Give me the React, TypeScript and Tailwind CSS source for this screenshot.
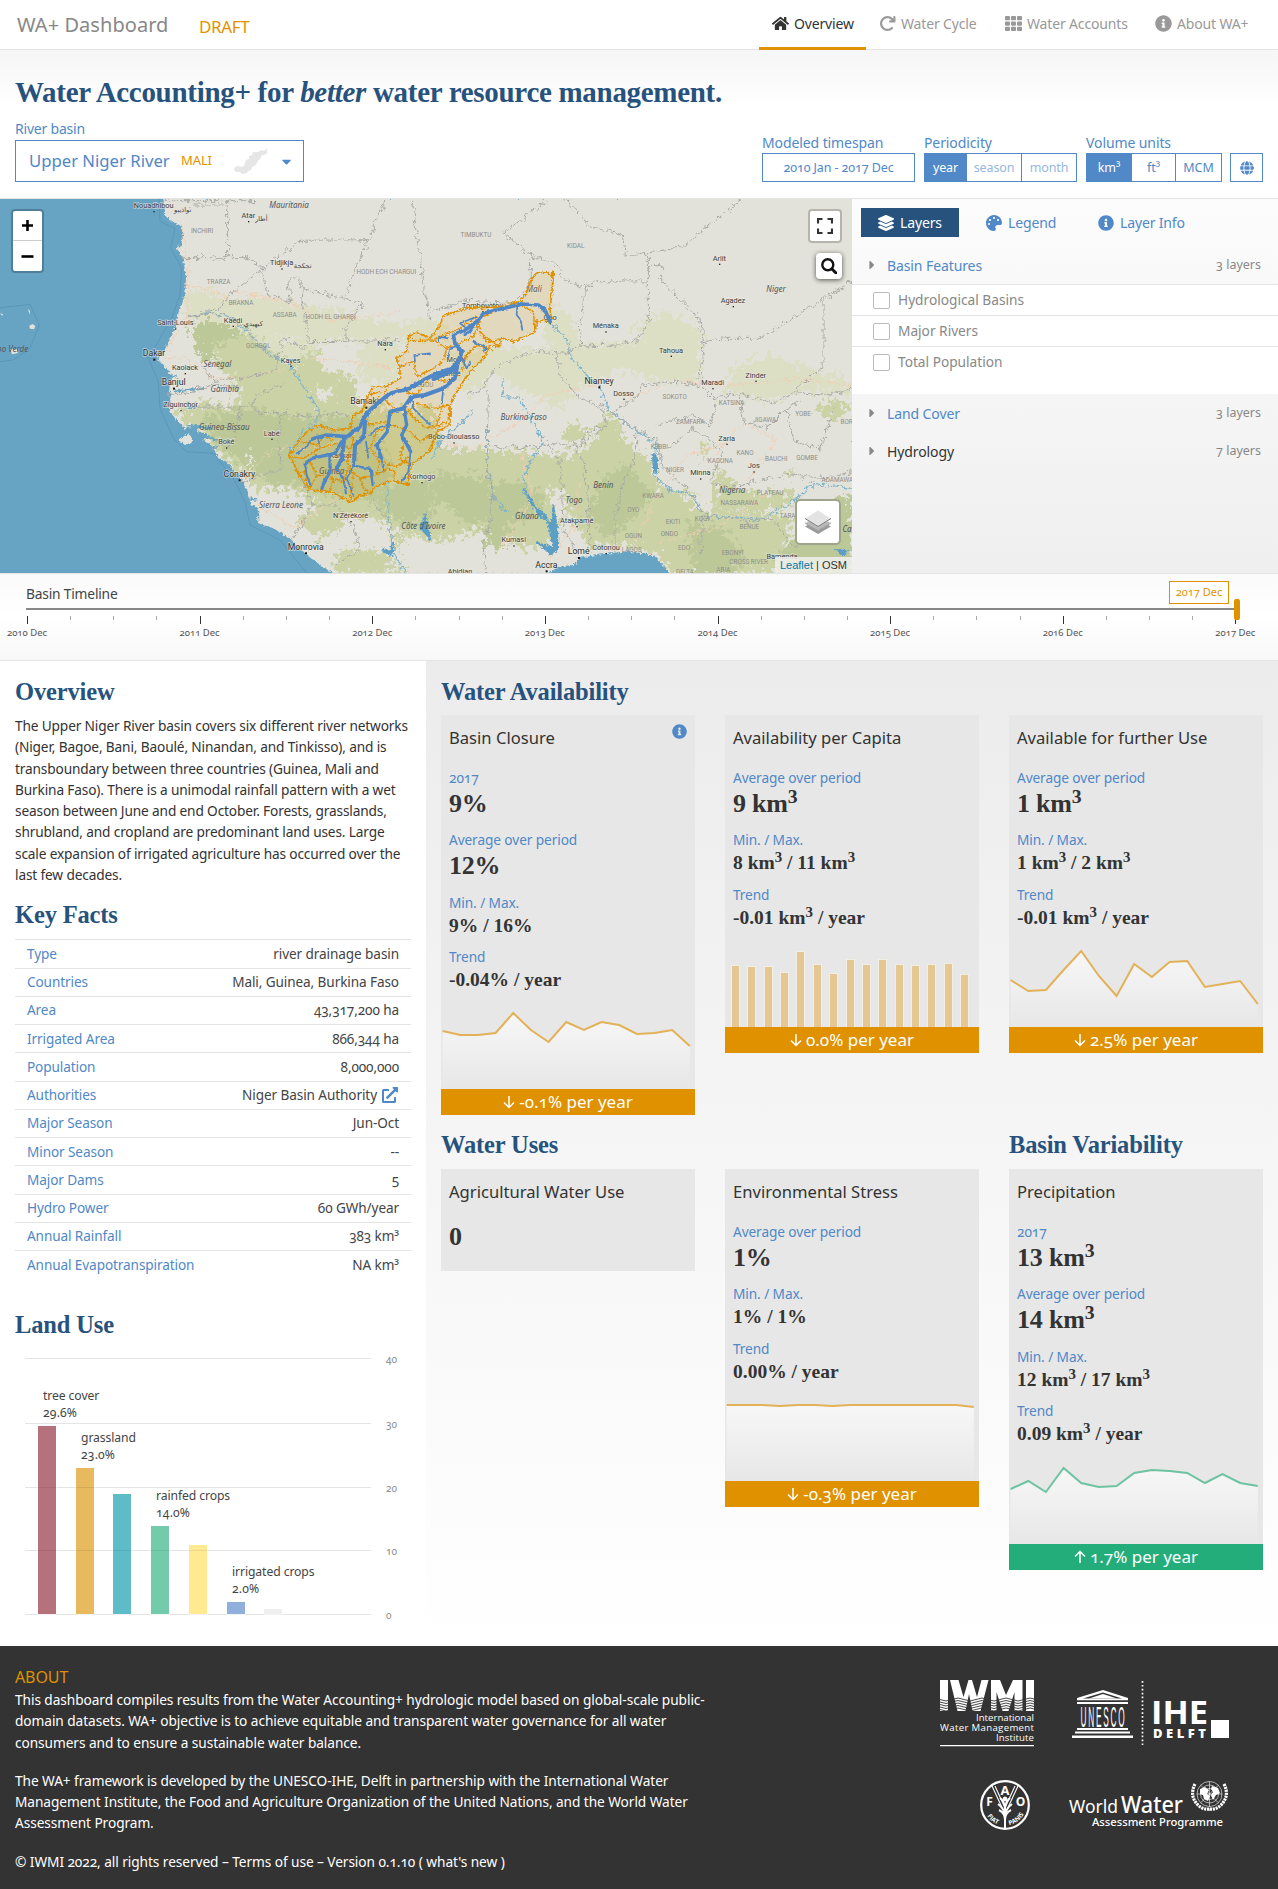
import { Fragment } from "react";
import type { ReactNode } from "react";
import {
  FaHome,
  FaTh,
  FaInfoCircle,
  FaGlobe,
  FaLayerGroup,
  FaPalette,
  FaCaretDown,
  FaCaretRight,
  FaExternalLinkAlt,
} from "react-icons/fa";
import { FaArrowRotateRight } from "react-icons/fa6";

/* ---------- shared pieces ---------- */

function H2({ children, className = "" }: { children: ReactNode; className?: string }) {
  return (
    <h2
      className={`font-['Liberation_Serif',serif] text-[24.500px] leading-[30px] font-bold tracking-[-0.15px] whitespace-nowrap text-[#27527d] ${className}`}
    >
      {children}
    </h2>
  );
}

function Km() {
  return (
    <>
      km<sup className="relative -top-[0.46em] text-[0.76em] leading-none">3</sup>
    </>
  );
}

/* ---------- header ---------- */

const nav = [
  { label: "Overview", icon: <FaHome />, w: "w-[107px]", active: true },
  { label: "Water Cycle", icon: <FaArrowRotateRight />, w: "w-[126px]" },
  { label: "Water Accounts", icon: <FaTh />, w: "w-[150px]" },
  { label: "About WA+", icon: <FaInfoCircle />, w: "w-[119px]" },
];

function TopBar() {
  return (
    <header className="flex h-[50px] items-stretch border-b border-[#e4e4e4] bg-white pr-[17px] pl-[17px]">
      <div className="w-[182px] pt-[10px] text-[20px] leading-[30px] tracking-[0.05px] whitespace-nowrap text-[#888]">
        WA+ Dashboard
      </div>
      <div className="pt-[13px] text-[17px] leading-[28px] tracking-[-0.35px] text-[#df9100]">DRAFT</div>
      <nav className="ml-auto flex">
        {nav.map((n) => (
          <a
            key={n.label}
            className={`-mb-px flex h-[50px] items-center gap-[5px] pb-[3px] pl-[13px] text-[14px] tracking-[-0.15px] whitespace-nowrap ${n.w} ${
              n.active ? "border-b-[3px] border-[#df9100] pt-[3px] text-[#333]" : "text-[#999]"
            }`}
          >
            <span className="text-[17px]">{n.icon}</span>
            {n.label}
          </a>
        ))}
      </nav>
    </header>
  );
}

function Control({ label, className = "", children }: { label: string; className?: string; children: ReactNode }) {
  return (
    <div className={`flex flex-col ${className}`}>
      <div className="h-[21px] text-[14px] leading-[21px] tracking-[-0.1px] whitespace-nowrap text-[#5088c8]">{label}</div>
      <div className="flex h-[29px] border border-[#5088c8] text-[12.500px] tracking-[-0.1px] text-[#5088c8]">{children}</div>
    </div>
  );
}

function Cell({ w, on, dim, children }: { w: string; on?: boolean; dim?: boolean; children: ReactNode }) {
  return (
    <div
      className={`flex items-center justify-center border-r border-[#5088c8] pt-px last:border-r-0 ${w} ${
        on ? "bg-[#5088c8] text-white" : dim ? "text-[#96b8de]" : ""
      }`}
    >
      {children}
    </div>
  );
}

function Intro() {
  return (
    <section className="flex h-[149px] flex-col border-b border-[#e4e4e4] bg-gradient-to-b from-[#f6f6f6] via-white via-40% to-white px-[15px]">
      <h1 className="mt-[22px] h-[40px] font-['Liberation_Serif',serif] text-[29px] leading-[40px] font-bold tracking-[-0.3px] whitespace-nowrap text-[#27527d]">
        Water Accounting+ for <em>better</em> water resource management.
      </h1>
      <div className="flex h-[70px] items-end">
        <div>
          <div className="mb-[1px] text-[14px] leading-[21px] tracking-[-0.2px] text-[#5088c8]">River basin</div>
          <div className="flex h-[42px] w-[289px] items-center border border-[#5088c8] pl-[13px] text-[16.700px] whitespace-nowrap text-[#5088c8]">
            <span className="w-[152px]">Upper Niger River</span>
            <span className="w-[53px] text-[13px] tracking-[-0.1px] text-[#df9100]">MALI</span>
            <svg width="34" height="28" viewBox="0 0 34 28" className="mr-[11px]">
              <path
                fill="#e6e6e6"
                d="M33 1 33 6 30 8 28 8 26 12 23 15 22 18 18 20 17 23 14 24 13 26 8 27 6 25 2 25 0 23 1 20 4 19 7 20 10 19 11 16 12 13 15 12 15 9 18 8 19 5 24 5 27 3 30 4Z"
              />
            </svg>
            <FaCaretDown className="text-[15px]" />
          </div>
        </div>
        <Control label="Modeled timespan" className="ml-auto w-[153px]">
          <Cell w="w-full">2010 Jan - 2017 Dec</Cell>
        </Control>
        <Control label="Periodicity" className="ml-[9px] w-[153px]">
          <Cell w="w-[42px]" on>year</Cell>
          <Cell w="w-[55px]" dim>season</Cell>
          <Cell w="w-[54px]" dim>month</Cell>
        </Control>
        <Control label="Volume units" className="ml-[9px] w-[136px]">
          <Cell w="w-[45px]" on>km³</Cell>
          <Cell w="w-[44px]">ft³</Cell>
          <Cell w="w-[45px]">MCM</Cell>
        </Control>
        <div className="ml-[8px] flex h-[29px] w-[33px] items-center justify-center border border-[#5088c8] text-[14px] text-[#5088c8]">
          <FaGlobe />
        </div>
      </div>
    </section>
  );
}

/* ---------- map ---------- */

const land =
  "M490,12 L496,60 L512,80 L530,85 L545,95 L548,130 L530,160 L548,188 L558,240 L556,290 L545,330 L530,370 L525,400 L505,440 L490,475 L472,490 L500,520 L515,545 L508,580 L512,600 L508,650 L540,685 L555,700 L600,690 L590,712 L625,715 L610,735 L640,760 L655,790 L680,800 L705,830 L730,860 L745,890 L752,930 L775,940 L775,985 L820,1000 L870,1030 L890,1050 L920,1080 L960,1110 L1000,1136 L1645,1136 L1675,1115 L1720,1110 L1740,1088 L1805,1078 L1875,1070 L1935,1075 L1965,1085 L1990,1110 L2010,1136 L2560,1136 L2560,8 L490,8Z";

const paleGreen = [
  "M558,290 L640,290 L700,320 L780,300 L860,320 L1000,340 L1080,370 L1200,390 L1290,370 L1340,400 L1340,440 L1100,432 L1020,440 L900,445 L870,425 L780,430 L700,400 L560,370Z",
  "M1350,480 L1480,455 L1620,470 L1755,450 L1915,440 L2100,445 L2100,560 L1975,560 L1875,520 L1735,580 L1675,640 L1480,540 L1400,600Z",
  "M1630,340 L1680,330 L1720,380 L1740,460 L1640,460Z",
  "M1900,390 L2000,350 L2100,400 L2110,450 L1930,450Z",
  "M2195,520 L2290,480 L2400,510 L2556,560 L2556,590 L2400,590 L2300,620 L2180,600Z",
  "M740,420 L900,445 L960,460 L860,520 L760,450Z",
  "M1080,440 L1200,445 L1190,560 L1080,560Z",
];

const midGreen = [
  "M515,640 L620,620 L760,640 L1300,640 L1330,760 L1700,780 L1800,840 L1990,880 L2110,950 L2380,960 L2330,1136 L2010,1136 L1975,1080 L1880,1050 L1760,1060 L1720,960 L1650,1040 L1560,1060 L1440,1000 L1340,1040 L1180,1010 L1050,980 L930,920 L780,890 L700,820 L600,720Z",
  "M640,440 L740,410 L830,480 L890,510 L960,450 L950,500 L990,530 L1060,540 L1075,610 L1060,660 L900,680 L700,660 L620,650 L720,610 L700,560 L650,510Z",
  "M1005,1080 L1060,1060 L1140,1070 L1200,1110 L1220,1136 L1010,1136Z",
  "M890,970 L960,930 L1050,950 L1010,1010 L940,1030Z",
  "M1180,1030 L1220,1010 L1200,1080Z",
  "M1690,700 L1740,680 L1770,720 L1700,760Z",
  "M1780,700 L1830,655 L1870,700 L1860,730 L1800,740Z",
  "M2100,740 L2130,750 L2110,800Z",
  "M2340,830 L2380,820 L2380,850Z",
  "M2440,640 L2500,610 L2556,640 L2500,680Z",
  "M2150,820 L2215,870 L2280,900 L2380,880 L2385,930 L2280,950 L2145,950Z",
  "M1680,800 L1780,740 L1860,720 L1900,760 L1955,800 L1975,870 L2105,910 L1900,900Z",
];

const deepGreen = [
  "M565,390 L640,375 L740,420 L640,450 L640,500 L600,490Z",
  "M600,670 L750,640 L900,670 L1080,660 L1130,720 L1180,830 L1120,920 L1000,900 L940,890 L880,870 L820,880 L790,840 L720,800 L650,750 L620,690Z",
  "M1130,880 L1280,850 L1300,960 L1220,990 L1150,960Z",
  "M1300,830 L1400,840 L1470,850 L1480,960 L1420,1000 L1340,930 L1290,920Z",
  "M1480,870 L1560,860 L1640,900 L1600,970 L1540,980 L1500,1060 L1450,1050Z",
  "M1800,860 L1880,800 L1960,900 L1900,960 L1830,1030 L1760,980Z",
  "M2335,1080 L2440,980 L2560,880 L2560,1140 L2320,1140Z",
  "M2060,980 L2160,1000 L2240,1080 L2200,1136 L2080,1136Z",
];

const bareLand = [
  "M770,890 L840,880 L920,900 L880,980 L850,1000 L790,970Z",
  "M620,540 L680,560 L640,580Z",
  "M650,600 L710,620 L680,635Z",
  "M950,570 L1010,600 L960,620Z",
  "M740,770 L770,800 L740,810Z",
  "M1650,870 L1700,900 L1700,1030 L1680,1060 L1660,940Z",
  "M1060,960 L1180,990 L1160,1050 L1040,1060 L1000,1020Z",
];

const borders = [
  "M496,17 L765,17",
  "M1233,12 L1290,380",
  "M545,188 L748,188 L790,220 L700,290 L660,340 L560,365",
  "M683,30 L683,188",
  "M570,30 L683,30",
  "M560,365 L620,358 L690,362 L745,400 L780,460 L835,490 L850,430 L910,460 L925,440 L1200,437",
  "M790,220 L900,136 L1105,134 L1160,12",
  "M1105,134 L1030,310 L905,280 L890,240 L865,265 L870,320 L800,300 L790,220",
  "M1030,310 L1085,330 L1035,400 L1040,437",
  "M905,280 L925,440",
  "M600,500 L640,560 L820,530 L835,490",
  "M580,636 L760,637 L780,655 L845,655 L940,665 L1050,655",
  "M500,600 L570,590 L640,570 L720,575",
  "M760,637 L765,600 L850,570",
  "M720,640 L700,740 L640,760",
  "M845,655 L835,740 L850,822 L720,860",
  "M890,820 L920,880 L940,930 L880,1030 L870,1060",
  "M940,930 L1010,930 L1060,1000 L1080,1060 L1010,1110",
  "M1115,895 L1130,940 L1170,980 L1180,1060",
  "M1290,350 L1420,310 L1440,325 L1540,320 L1590,270 L1592,182 L1510,115 L1640,15",
  "M1592,182 L1660,200 L1700,260 L1760,278 L1740,380 L1745,450",
  "M1700,12 L1740,60 L1770,95 L1830,110 L1870,120 L1880,185 L2050,155 L2200,30 L2225,12",
  "M1945,180 L1945,380 L1920,430 L1860,450 L1740,453 L1700,475 L1600,468 L1500,510 L1480,530 L1440,590 L1400,600",
  "M1760,278 L1785,257 L1945,258",
  "M1945,212 L1985,212 L1985,260 L2060,330 L2100,380 L2110,440 L2100,550",
  "M2110,440 L2180,430 L2280,430 L2556,258",
  "M2472,300 L2472,515 L2390,580",
  "M1670,475 L1680,540 L1730,600 L1810,640 L1820,690 L1740,750",
  "M1465,755 L1620,755 L1640,745 L1740,753 L1760,710 L1820,690",
  "M1465,590 L1460,830 L1480,900 L1470,980 L1450,1060 L1460,1136",
  "M1640,745 L1680,800 L1690,1000 L1740,1088",
  "M1720,740 L1750,800 L1765,920 L1770,1060",
  "M1830,655 L1910,700 L1910,780 L1870,860 L1845,960 L1845,1070",
  "M1830,655 L1910,610 L1930,570 L2000,560 L2100,570 L2140,610 L2220,595 L2320,625 L2390,590 L2500,600 L2556,580",
  "M1910,700 L1970,740 L1990,820 L2060,880 L2110,960 L2100,1080",
  "M1970,690 L2080,660 L2130,690 L2150,620",
  "M2220,600 L2230,680 L2300,700 L2360,640 L2400,620",
  "M2360,640 L2380,740 L2460,760 L2500,640",
  "M2000,760 L2080,700 L2170,770 L2130,860 L2190,880 L2300,850 L2380,840 L2470,850 L2556,830",
  "M2110,960 L2240,980 L2320,970 L2380,1060 L2440,990",
];

const roads = [
  "M545,95 L565,200 L560,360 L500,470",
  "M490,490 L560,490 L640,550 L740,545 L850,520",
  "M700,290 L860,320 L1000,380 L1200,350",
  "M560,270 L640,285 L700,330 L780,290",
  "M720,860 L820,760 L960,760 L1100,700",
  "M770,930 L880,1000 L1020,900",
  "M930,490 L1060,500 L1180,520",
  "M1325,740 L1420,760 L1560,680 L1640,600 L1790,570",
  "M1560,760 L1600,900 L1500,1060",
  "M1640,1100 L1720,1000 L1740,860",
  "M1870,620 L2000,560 L2200,570 L2400,550 L2556,570",
  "M2150,780 L2230,680 L2330,740 L2240,860",
  "M1900,1060 L1960,920 L2060,780 L2200,740",
  "M1980,1040 L2150,1000 L2300,900",
];

const basin =
  "M1607,235 L1640,230 L1655,242 L1660,226 L1657,280 L1650,340 L1655,380 L1610,378 L1605,412 L1540,440 L1505,428 L1500,455 L1470,452 L1450,490 L1410,530 L1370,590 L1350,632 L1350,690 L1310,710 L1292,765 L1260,790 L1230,810 L1225,870 L1190,860 L1160,860 L1120,880 L1115,895 L1080,900 L1055,922 L1010,900 L990,890 L925,885 L905,850 L890,830 L880,800 L865,785 L895,740 L920,710 L955,690 L1000,705 L1050,700 L1060,660 L1085,650 L1105,600 L1120,575 L1160,575 L1200,550 L1200,515 L1188,490 L1220,470 L1225,425 L1250,412 L1290,430 L1320,390 L1330,362 L1400,340 L1500,335 L1560,320 L1580,290 L1590,260Z";

const subBasins = [
  "M1225,437 L1300,435 L1380,400 L1420,370 L1480,352",
  "M1300,435 L1340,460 L1420,425 L1440,380",
  "M1430,360 L1445,420 L1500,455",
  "M1605,412 L1600,350 L1550,325",
  "M1480,465 L1430,450 L1400,480 L1385,530",
  "M1340,460 L1330,500 L1300,520 L1250,545 L1240,500 L1200,515",
  "M1380,540 L1340,560 L1290,545 L1250,600 L1190,580",
  "M1350,630 L1300,640 L1250,625 L1215,660",
  "M1325,640 L1310,690 L1280,700 L1240,670 L1225,640",
  "M1160,575 L1150,610 L1180,640 L1160,680 L1105,690 L1090,660",
  "M1290,720 L1260,740 L1230,710 L1180,690 L1130,710 L1110,760",
  "M1050,700 L1060,740 L1040,800 L1060,840 L1050,915",
  "M1110,760 L1140,800 L1130,840 L1080,850 L1055,830",
  "M1140,800 L1190,815 L1230,780",
  "M1130,840 L1160,820 L1185,830 L1180,860",
  "M865,785 L910,790 L960,760 L1010,745 L1050,760",
  "M905,740 L950,750 L970,720 L1000,735",
  "M930,800 L950,840 L930,880",
  "M950,840 L1000,850 L990,890",
  "M1000,850 L1030,860 L1045,820",
  "M885,830 L915,830 L925,885",
  "M1080,850 L1090,880 L1115,895",
  "M1230,810 L1200,790 L1210,750",
  "M1110,600 L1140,590 L1130,630",
  "M1355,640 L1340,680 L1300,700",
  "M1440,400 L1460,440 L1500,435",
];

const rivers: [number, string][] = [
  [11, "M1650,380 L1635,345 L1615,330 L1565,327 L1500,343 L1450,355 L1432,378 L1400,402 L1360,420 L1365,445 L1385,470"],
  [12, "M1385,470 L1375,500 L1355,520 L1300,540 L1275,553 L1230,580 L1170,595 L1120,635 L1092,668"],
  [11, "M1092,668 L1080,695 L1040,725 L980,720 L935,732"],
  [12, "M1385,470 L1372,510 L1365,550 L1330,580 L1275,600 L1235,605 L1210,640 L1170,650"],
  [10, "M1170,650 L1162,710 L1130,750 L1145,790"],
  [5, "M1145,790 L1150,830"],
  [10, "M1212,640 L1220,690 L1205,720 L1232,770"],
  [12, "M1095,680 L1092,725 L1065,750 L1062,812"],
  [7, "M1062,812 L1112,822 L1118,870"],
  [12, "M1032,728 L1026,790 L1010,822"],
  [6, "M1010,822 L1030,850 L1038,895"],
  [10, "M1025,740 L1005,775 L935,790 L915,808"],
  [6, "M915,808 L920,840 L932,872"],
  [10, "M990,780 L990,830 L972,862 L966,880"],
  [5, "M935,732 L915,760 L890,775"],
  [5, "M950,725 L960,750"],
  [5, "M1098,740 L1105,790"],
  [5, "M1062,812 L1040,850 L1060,900"],
  [5, "M1232,770 L1225,830 L1205,860"],
  [5, "M1235,605 L1240,640 L1290,690"],
  [5, "M1552,330 L1550,360 L1562,375 L1567,405"],
  [5, "M1245,500 L1243,480 L1290,475"],
  [5, "M1400,400 L1380,385 L1430,365"],
  [9, "M1430,380 L1410,410 L1395,418"],
  [5, "M1345,430 L1317,425 L1318,440"],
  [5, "M1380,450 L1350,460 L1345,490"],
  [5, "M1420,440 L1460,460 L1450,468"],
  [5, "M1385,490 L1400,520 L1410,500"],
  [11, "M1370,520 L1330,540 L1300,552"],
  [5, "M1330,580 L1325,625"],
  [5, "M1160,690 L1130,700 L1110,720"],
];

const lakes = [
  "M1640,980 L1640,960 L1610,940 L1590,910 L1570,880 L1585,910 L1610,950 L1645,985 L1660,1060 L1610,1040 L1655,1080 L1672,1060 L1672,1000 L1660,930 L1655,985Z",
  "M1958,780 L1970,780 L1972,830 L1962,830Z",
  "M1262,1000 L1275,960 L1290,1030Z",
  "M1145,1060 L1170,1070 L1180,1040 L1175,1080 L1160,1078Z",
  "M2510,1065 L2540,1068 L2530,1080Z",
];

const streams = [
  "M1650,385 L1700,430 L1710,480 L1760,540 L1800,580 L1830,650 L1900,700 L1970,750 L1965,840 L2000,880 L2080,900 L2110,960 L2280,975 L2380,920 L2440,865 L2556,880",
  "M560,365 L640,352 L700,370 L750,420 L800,470 L870,510 L920,590 L955,640 L950,680 L900,720 L860,780",
  "M1509,550 L1510,605 L1560,610 L1600,690 L1630,740 L1590,800 L1570,860 L1575,900",
  "M1300,790 L1320,740 L1380,690 L1420,640",
  "M1460,700 L1460,820 L1480,910 L1520,950",
  "M1160,860 L1165,960 L1175,1040 L1190,1090 L1215,1134",
];

type Label = [number, number, string];
const cities: Label[] = [
  [461, 39, "Nouadhibou"], [745, 69, "Atar"], [845, 211, "Tidjikja"], [526, 391, "Saint-Louis"], [699, 383, "Kaédi"],
  [555, 525, "Kaolack"], [542, 636, "Ziguinchor"], [815, 722, "Labé"], [679, 748, "Boké"], [1052, 969, "N'Zérékoré"],
  [872, 503, "Kayes"], [1155, 453, "Nara"], [1265, 852, "Korhogo"], [1361, 733, "Bobo-Dioulasso"], [1448, 339, "Tombouctou"],
  [1368, 501, "Mopti"], [1348, 544, "Djenné"], [1650, 375, "Gao"], [1817, 400, "Ménaka"], [2158, 197, "Arlit"], [2199, 324, "Agadez"],
  [2013, 473, "Tahoua"], [1871, 602, "Dosso"], [2138, 570, "Maradi"], [2267, 548, "Zinder"], [2180, 737, "Zaria"],
  [2261, 820, "Jos"], [2101, 841, "Minna"], [1730, 984, "Atakpamé"], [1818, 1065, "Cotonou"], [1541, 1042, "Kumasi"],
  [1380, 1136, "Abidjan"], [2346, 1093, "Bamenda"], [1025, 788, "Kankan"],
];
const capitals: Label[] = [
  [462, 483, "Dakar"], [521, 570, "Banjul"], [718, 845, "Conakry"], [917, 1064, "Monrovia"], [1098, 627, "Bamako"],
  [1797, 566, "Niamey"], [1736, 1078, "Lomé"], [1639, 1118, "Accra"],
];
const countries: Label[] = [
  [867, 40, "Mauritania"], [652, 517, "Senegal"], [674, 591, "Gambia"], [673, 705, "Guinea-Bissau"], [843, 938, "Sierra Leone"],
  [995, 836, "Guinea"], [1270, 1001, "Côte d'Ivoire"], [1602, 290, "Mali"], [2328, 290, "Niger"], [1571, 674, "Burkina Faso"],
  [1810, 879, "Benin"], [1722, 925, "Togo"], [1581, 972, "Ghana"], [2197, 893, "Nigeria"], [2541, 1010, "Ca"], [24, 472, "Cabo Verde"],
];
const regions: Label[] = [
  [606, 113, "INCHIRI"], [656, 268, "TRARZA"], [723, 329, "BRAKNA"], [854, 365, "ASSABA"], [992, 371, "HODH EL GHARBI"],
  [1159, 236, "HODH ECH CHARGUI"], [775, 459, "GORGOL"], [1428, 125, "TIMBUKTU"], [1727, 160, "KIDAL"], [2024, 613, "SOKOTO"],
  [2195, 630, "KATSINA"], [2409, 664, "YOBE"], [2294, 682, "JIGAWA"], [2071, 687, "ZAMFARA"], [1978, 762, "KEBBI"],
  [2235, 780, "KANO"], [2161, 804, "KADUNA"], [2329, 798, "BAUCHI"], [2421, 796, "GOMBE"], [2025, 830, "NIGER"],
  [1959, 909, "KWARA"], [1900, 951, "OYO"], [2106, 979, "KOGI"], [2019, 987, "EKITI"], [2248, 1001, "BENUE"],
  [2008, 1023, "ONDO"], [1900, 1029, "OGUN"], [2052, 1065, "EDO"], [1895, 1071, "LAGOS"], [2198, 1079, "EBONYI"],
  [2246, 1106, "CROSS RIVER"], [2218, 930, "NASSARAWA"], [2310, 899, "PLATEAU"], [2512, 862, "ADAMAWA"], [2540, 687, "BOR"],
  [2375, 969, "TARABA"], [2055, 1136, "DELTA"], [2170, 1130, "ABIA"], [1270, 575, "SÉGOU"],
];
const arabic: Label[] = [[548, 50, "نواذيبو"], [784, 77, "أطار"], [908, 220, "تجكجة"], [760, 394, "كيهيدي"]];

function MapCanvas() {
  return (
    <svg className="block h-full w-full" viewBox="0 12 2556 1122" preserveAspectRatio="none">
      <defs>
        <filter id="rough" x="-5%" y="-5%" width="110%" height="110%">
          <feTurbulence type="fractalNoise" baseFrequency="0.06" numOctaves="4" seed="4" />
          <feDisplacementMap in="SourceGraphic" scale="30" xChannelSelector="R" yChannelSelector="G" />
        </filter>
        <filter id="patchy" x="-5%" y="-5%" width="110%" height="110%">
          <feTurbulence type="fractalNoise" baseFrequency="0.06" numOctaves="4" seed="9" />
          <feDisplacementMap in="SourceGraphic" scale="85" xChannelSelector="R" yChannelSelector="G" />
        </filter>
        <filter id="fine" x="-5%" y="-5%" width="110%" height="110%">
          <feTurbulence type="fractalNoise" baseFrequency="0.12" numOctaves="3" seed="2" />
          <feDisplacementMap in="SourceGraphic" scale="15" xChannelSelector="R" yChannelSelector="G" />
        </filter>
        <filter id="gentle" x="-5%" y="-5%" width="110%" height="110%">
          <feTurbulence type="fractalNoise" baseFrequency="0.07" numOctaves="2" seed="7" />
          <feDisplacementMap in="SourceGraphic" scale="9" xChannelSelector="R" yChannelSelector="G" />
        </filter>
        <clipPath id="landClip">
          <path d={land} />
        </clipPath>
      </defs>
      <rect x="0" y="0" width="2556" height="1140" fill="#67a4c4" />
      <path
        d="M478,12 L480,80 L525,100 L512,160 L545,220 L540,300 L515,370 L480,430 L445,490 L475,560 L480,640 L520,730 L560,770 L640,775 L700,850 L735,920 L750,990 L840,1035 L920,1134 M0,338 L90,328 L118,390 L90,460 L40,495 L0,500"
        fill="none"
        stroke="#5b96ba"
        strokeWidth="3"
      />
      <path fill="#e2e2da" d="M88,392 l10,-5 8,6 -4,10 -12,-2Z M84,343 l6,4 -1,12Z M0,355 l10,3 -4,4Z M30,462 l20,0 4,12 -18,4Z" />
      <g filter="url(#fine)">
        <path d={land} fill="#e2e2da" />
        <path d="M535,735 l30,-20 15,25 -25,10Z M600,690 l25,0 -20,18Z" fill="#e2e2da" />
      </g>
      <g clipPath="url(#landClip)">
        <g filter="url(#patchy)">
          {paleGreen.map((d) => <path key={d} d={d} fill="#dcdfc4" />)}
          {midGreen.map((d) => <path key={d} d={d} fill="#cbd3a6" />)}
          {deepGreen.map((d) => <path key={d} d={d} fill="#bdc898" />)}
          {bareLand.map((d) => <path key={d} d={d} fill="#e2e2da" />)}
        </g>
      </g>
      <g filter="url(#fine)">
        <path
          d="M530,95 l18,20 -10,40 M510,545 l20,0 M522,590 l50,-6 40,-3 M560,640 l30,-4 M560,690 l75,10 M590,715 l60,20 M625,750 l25,10 M750,910 l20,4 M745,935 l20,2"
          stroke="#67a4c4"
          strokeWidth="7"
          fill="none"
        />
      </g>
      <g fill="none" filter="url(#rough)">
        {roads.map((d) => <path key={d} d={d} stroke="#f0cdb4" strokeWidth="3" />)}
        {streams.map((d) => <path key={d} d={d} stroke="#80b4cb" strokeWidth="4" />)}
        {borders.map((d) => <path key={d} d={d} stroke="#a8a9a6" strokeWidth="3" />)}
      </g>
      <g fill="#5c9fc4" stroke="#5c9fc4" strokeWidth="5" filter="url(#fine)">
        {lakes.map((d) => <path key={d} d={d} />)}
      </g>
      <g textAnchor="middle" fontFamily="Roboto, sans-serif">
        <g fontSize="19" fill="#8e8e8c">
          {regions.map(([x, y, t]) => <text key={t} x={x} y={y}>{t}</text>)}
        </g>
        <g fontSize="22" fill="#3b3b3b" stroke="#ebebe3" strokeWidth="4" strokeOpacity="0.7" paintOrder="stroke">
          {cities.map(([x, y, t]) => (
            <Fragment key={t}>
              <text x={x} y={y}>{t}</text>
              <rect x={x - 1} y={y + 9} width="4" height="4" fill="#222" stroke="none" />
            </Fragment>
          ))}
        </g>
        <g fontSize="26" fill="#2e2e2e" stroke="#ebebe3" strokeWidth="4" strokeOpacity="0.7" paintOrder="stroke">
          {capitals.map(([x, y, t]) => (
            <Fragment key={t}>
              <text x={x} y={y}>{t}</text>
              <rect x={x - 2} y={y + 8} width="6" height="6" fill="#111" stroke="none" />
            </Fragment>
          ))}
        </g>
        <g fontSize="24" fontStyle="italic" fill="#55555f" fontFamily="Noto Sans, sans-serif">
          {countries.map(([x, y, t]) => <text key={t} x={x} y={y}>{t}</text>)}
        </g>
        <g fontSize="20" fill="#444" fontFamily="DejaVu Sans, sans-serif">
          {arabic.map(([x, y, t]) => <text key={t} x={x} y={y}>{t}</text>)}
        </g>
      </g>
      <g fill="none" strokeLinejoin="round" filter="url(#fine)">
        <path d={basin} fill="#df9100" fillOpacity="0.13" stroke="#df9100" strokeWidth="5" />
        {subBasins.map((d) => <path key={d} d={d} stroke="#df9100" strokeWidth="4" />)}
      </g>
      <g fill="none" stroke="#4f86c6" strokeLinejoin="round" strokeLinecap="round" filter="url(#gentle)">
        {rivers.map(([w, d]) => <path key={d} d={d} strokeWidth={w} />)}
      </g>
    </svg>
  );
}

function MapView() {
  return (
    <div className="relative h-[374px] w-[852px] overflow-hidden bg-[#67a4c4]">
      <MapCanvas />
      <div className="absolute top-[10px] left-[11px] w-[33px] overflow-hidden rounded-[4px] border-2 border-[#4f7f99] bg-white">
        <div className="flex h-[30px] items-center justify-center border-b border-[#ccc]">
          <svg width="13" height="13" viewBox="0 0 13 13"><path d="M6.500 1v11M1 6.500h11" stroke="#000" strokeWidth="2.600" /></svg>
        </div>
        <div className="flex h-[30px] items-center justify-center">
          <svg width="13" height="13" viewBox="0 0 13 13"><path d="M.500 6.500h12" stroke="#000" strokeWidth="2.600" /></svg>
        </div>
      </div>
      <div className="absolute top-[10px] right-[10px] flex h-[34px] w-[34px] items-center justify-center rounded-[4px] border-2 border-[#b5b5ae] bg-white">
        <svg width="16" height="16" viewBox="0 0 16 16" fill="none" stroke="#333" strokeWidth="2.200">
          <path d="M1 5.500V1h4.500M10.500 1H15v4.500M15 10.500V15h-4.500M5.500 15H1v-4.500" />
        </svg>
      </div>
      <div className="absolute top-[54px] right-[10px] flex h-[26px] w-[26px] items-center justify-center rounded-[4px] bg-white shadow-[0_1px_5px_rgba(0,0,0,0.65)]">
        <svg width="16" height="16" viewBox="0 0 16 16" fill="none" stroke="#111">
          <circle cx="6.800" cy="6.800" r="5.500" strokeWidth="2.400" />
          <path d="M11 11l4 4" strokeWidth="3" strokeLinecap="round" />
        </svg>
      </div>
      <div className="absolute right-[11px] bottom-[28px] flex h-[46px] w-[46px] items-center justify-center rounded-[5px] border-2 border-[#9ea58b] bg-white">
        <svg width="28" height="26" viewBox="0 0 28 26">
          <path d="M14 25 1 17.500 14 10 27 17.500Z" fill="#9a9a9a" />
          <path d="M14 21.500 1 14 14 6.500 27 14Z" fill="#b9b9b9" stroke="#fff" strokeWidth="0.600" />
          <path d="M14 17.500 1 9.500 14 1 27 9.500Z" fill="#e3e3e3" stroke="#fff" strokeWidth="0.600" />
          <path d="M1 9.500 14 17.500 27 9.500" fill="none" stroke="#777" strokeWidth="1" />
          <path d="M1 14 14 21.500 27 14" fill="none" stroke="#888" strokeWidth="0.800" />
        </svg>
      </div>
      <div className="absolute right-0 bottom-0 h-[16px] bg-[#f1f1ec]/85 px-[5px] font-['Liberation_Sans',sans-serif] text-[11px] leading-[16px] whitespace-nowrap text-[#333]">
        <span className="text-[#0078a8]">Leaflet</span> | OSM
      </div>
    </div>
  );
}

function GroupRow({ name, count, dark }: { name: string; count: number; dark?: boolean }) {
  return (
    <div className="flex h-[38px] items-center pr-[17px] pl-[16px]">
      <FaCaretRight className="w-[8px] text-[14px] text-[#888]" />
      <span className={`ml-[11px] pt-px text-[14px] tracking-[-0.1px] ${dark ? "text-[#333]" : "text-[#5088c8]"}`}>{name}</span>
      <span className="ml-auto text-[12.500px] text-[#888]">{count} layers</span>
    </div>
  );
}

function LayerPanel() {
  return (
    <div className="flex h-[374px] flex-1 flex-col bg-gradient-to-b from-[#fcfcfc] to-[#efefef]">
      <div className="flex h-[47px] items-start pt-[9px] pl-[9px] text-[14px] tracking-[-0.15px] whitespace-nowrap text-[#5088c8]">
        <div className="flex h-[29px] w-[98px] items-center justify-center gap-[6px] bg-[#27527d] text-white">
          <FaLayerGroup className="text-[16px]" />
          Layers
        </div>
        <div className="ml-[27px] flex h-[29px] w-[112px] items-center gap-[6px]">
          <FaPalette className="text-[16px]" />
          Legend
        </div>
        <div className="flex h-[29px] items-center gap-[6px]">
          <FaInfoCircle className="text-[16px]" />
          Layer Info
        </div>
      </div>
      <GroupRow name="Basin Features" count={3} />
      <div className="h-[110px] bg-white">
        {["Hydrological Basins", "Major Rivers", "Total Population"].map((l) => (
          <div key={l} className="flex h-[31px] items-center border-t border-[#e4e4e4] pl-[21px] text-[13.700px] text-[#888]">
            <span className="mr-[8px] h-[17px] w-[17px] rounded-[2px] border border-[#bbb] bg-white" />
            {l}
          </div>
        ))}
      </div>
      <GroupRow name="Land Cover" count={3} />
      <GroupRow name="Hydrology" count={7} dark />
    </div>
  );
}

/* ---------- timeline ---------- */

const years = [2010, 2011, 2012, 2013, 2014, 2015, 2016, 2017];

function Timeline() {
  return (
    <section className="relative h-[88px] border-y border-[#e4e4e4] bg-gradient-to-b from-[#fafafa] via-white via-50% to-[#f8f8f8]">
      <div className="h-[34px] pt-[9px] pl-[26px] text-[13.800px] leading-[22px] tracking-[-0.2px] text-[#444]">Basin Timeline</div>
      <div className="ml-[26px] h-[2px] w-[1210px] bg-[#888]" />
      <div className="mt-[6px] ml-[27px] flex">
        {years.map((y) => (
          <div key={y} className={y === 2017 ? "w-px" : "w-[172.640px]"}>
            <div className="flex h-[9px]">
              <div className="w-[43.160px]"><div className="h-[8px] w-px bg-[#333]" /></div>
              {y !== 2017 &&
                [1, 2, 3].map((q) => (
                  <div key={q} className="w-[43.160px]"><div className="h-[4px] w-px bg-[#aaa]" /></div>
                ))}
            </div>
            <div className="-ml-[30px] w-[60px] pt-[1px] text-center text-[9.500px] leading-[14px] whitespace-nowrap text-[#555]">
              {y} Dec
            </div>
          </div>
        ))}
      </div>
      <div className="absolute top-[7px] left-[1169px] flex h-[23px] w-[60px] items-center justify-center border border-[#df9100] bg-white text-[11px] whitespace-nowrap text-[#df9100]">
        2017 Dec
      </div>
      <div className="absolute top-[25px] left-[1234px] h-[21px] w-[6px] rounded-[2px] bg-[#df9100]" />
    </section>
  );
}

/* ---------- left column ---------- */

const facts: [string, ReactNode][] = [
  ["Type", "river drainage basin"],
  ["Countries", "Mali, Guinea, Burkina Faso"],
  ["Area", "43,317,200 ha"],
  ["Irrigated Area", "866,344 ha"],
  ["Population", "8,000,000"],
  ["Authorities", "Niger Basin Authority"],
  ["Major Season", "Jun-Oct"],
  ["Minor Season", "--"],
  ["Major Dams", "5"],
  ["Hydro Power", "60 GWh/year"],
  ["Annual Rainfall", "383 km³"],
  ["Annual Evapotranspiration", "NA km³"],
];

const cover = [
  { x: 38, top: 1426, c: "#b5717c", t: "tree cover", v: "29.6%" },
  { x: 76, top: 1468, c: "#e8b95f", t: "grassland", v: "23.0%" },
  { x: 113, top: 1494, c: "#5dbcc8" },
  { x: 151, top: 1526, c: "#73cbab", t: "rainfed crops", v: "14.0%" },
  { x: 189, top: 1545, c: "#ffea92" },
  { x: 227, top: 1602, c: "#8fb0da", t: "irrigated crops", v: "2.0%" },
  { x: 264, top: 1609, c: "#efefef" },
];
const grid: [number, number][] = [[40, 1358.5], [30, 1423.5], [20, 1487.5], [10, 1550.5], [0, 1614.5]];

function LandUseChart() {
  return (
    <svg width="426" height="290" viewBox="0 1340 426 290" className="block font-['Noto_Sans',sans-serif] oldstyle-nums">
      {grid.map(([v, y]) => (
        <g key={v}>
          <path d={`M25 ${y}H371`} stroke="#e4e4e4" />
          <text x="386" y={y + 4} fontSize="10" fill="#888">{v}</text>
        </g>
      ))}
      {cover.map((b) => (
        <g key={b.x}>
          <rect x={b.x} y={b.top} width="18" height={1614 - b.top} fill={b.c} stroke="#fff" strokeWidth="1" paintOrder="stroke" />
          {grid.filter(([, y]) => y > b.top && y < 1610).map(([v, y]) => (
            <path key={v} d={`M${b.x} ${y}h18`} stroke="#000" strokeOpacity="0.08" />
          ))}
          {b.t && (
            <g fontSize="12.2" fill="#444">
              <text x={b.x + 5} y={b.top - 26} letterSpacing="-0.1">{b.t}</text>
              <text x={b.x + 5} y={b.top - 9} letterSpacing="0.15">{b.v}</text>
            </g>
          )}
        </g>
      ))}
    </svg>
  );
}

function Sidebar() {
  return (
    <aside className="w-[426px] bg-white">
      <div className="px-[15px] pt-[16px]">
        <H2>Overview</H2>
        <p className="mt-[8px] text-[13.700px] leading-[21.300px] tracking-[-0.15px] whitespace-nowrap text-[#333]">
          The Upper Niger River basin covers six different river networks
          <br />
          (Niger, Bagoe, Bani, Baoulé, Ninandan, and Tinkisso), and is
          <br />
          transboundary between three countries (Guinea, Mali and
          <br />
          Burkina Faso). There is a unimodal rainfall pattern with a wet
          <br />
          season between June and end October. Forests, grasslands,
          <br />
          shrubland, and cropland are predominant land uses. Large
          <br />
          scale expansion of irrigated agriculture has occurred over the
          <br />
          last few decades.
        </p>
        <H2 className="mt-[15px]">Key Facts</H2>
        <dl className="mt-[9px]">
          {facts.map(([k, v]) => (
            <div
              key={k}
              className="flex h-[28.250px] items-center justify-between border-t border-[#e4e4e4] px-[12px] text-[13.600px] tracking-[-0.1px] whitespace-nowrap"
            >
              <dt className="text-[#5088c8]">{k}</dt>
              <dd className="flex items-center text-[#444]">
                {v}
                {k === "Authorities" && <FaExternalLinkAlt className="mr-[1px] ml-[5px] text-[16px] text-[#5088c8]" />}
              </dd>
            </div>
          ))}
        </dl>
        <H2 className="mt-[32px] h-[30px]">Land Use</H2>
      </div>
      <LandUseChart />
    </aside>
  );
}

/* ---------- metric cards ---------- */

function Spark({ data, color, id }: { data: number[]; color: string; id: string }) {
  const pts = data.map((h, i) => `${(1.6 + i * 17.66).toFixed(1)},${80 - h}`).join(" ");
  return (
    <svg width="254" height="80" viewBox="0 0 254 80" className="block">
      <defs>
        <linearGradient id={id} x1="0" y1="0" x2="0" y2="1">
          <stop offset="0" stopColor="#f7f7f7" />
          <stop offset="1" stopColor="#e7e7e7" />
        </linearGradient>
      </defs>
      <polygon points={`1.6,80 ${pts} 248.800,80`} fill={`url(#${id})`} />
      <polyline points={pts} fill="none" stroke={color} strokeWidth="2" />
    </svg>
  );
}

function Bars({ data }: { data: number[] }) {
  return (
    <svg width="254" height="80" viewBox="0 0 254 80" className="block">
      {data.map((h, i) => (
        <rect key={i} x={Math.round(7 + i * 16.36)} y={80 - h} width="7" height={h + 2} fill="#e5c793" stroke="#f3eee4" strokeWidth="2" paintOrder="stroke" />
      ))}
    </svg>
  );
}

function Stat({ label, big, children }: { label: string; big?: boolean; children: ReactNode }) {
  return (
    <div className={big ? "h-[62.300px]" : "h-[54.500px]"}>
      <div className="h-[20px] text-[13.700px] leading-[20px] tracking-[-0.1px] text-[#5088c8]">{label}</div>
      <div
        className={`font-['Liberation_Serif',serif] font-bold whitespace-nowrap text-[#333] lining-nums ${
          big ? "text-[26px] leading-[31px] tracking-[-0.2px]" : "text-[19.500px] leading-[26px]"
        }`}
      >
        {children}
      </div>
    </div>
  );
}

function Card({
  title, h, info, chart, foot, up, children,
}: {
  title: string; h: string; info?: boolean; chart?: ReactNode; foot?: string; up?: boolean; children: ReactNode;
}) {
  return (
    <article className={`flex w-[254px] flex-col bg-[#e7e7e7] ${h}`}>
      <div className="flex h-[53px] shrink-0 items-start justify-between pt-[8px] pr-[8px] pl-[8px]">
        <h3 className="pt-[3px] text-[16.600px] leading-[24px] whitespace-nowrap text-[#333]">{title}</h3>
        {info && <FaInfoCircle className="mt-px text-[15px] text-[#5088c8]" />}
      </div>
      <div className="pl-[8px]">{children}</div>
      {foot && (
        <div className="mt-auto">
          {chart}
          <div
            className={`flex h-[26px] items-center justify-center gap-[4px] text-[17px] whitespace-nowrap text-white ${
              up ? "bg-[#23ad7b]" : "bg-[#df9100]"
            }`}
          >
            <svg width="12" height="14" viewBox="0 0 12 14" fill="none" stroke="#fff" strokeWidth="1.500" className={up ? "rotate-180" : ""}>
              <path d="M6 1v11M1 7.500 6 12.500 11 7.500" />
            </svg>
            {foot}
          </div>
        </div>
      )}
    </article>
  );
}

const AVG = "Average over period";
const ORANGE = "#e2b158";

function Metrics() {
  return (
    <main className="flex-1 bg-gradient-to-b from-[#ececec] to-white pl-[15px]">
      <H2 className="pt-[16px]">Water Availability</H2>
      <div className="mt-[8px] flex h-[442px] items-start gap-[30px]">
        <Card title="Basin Closure" h="h-[400px]" info foot="-0.1% per year" chart={<Spark id="g1" color={ORANGE} data={[58, 54, 54, 56, 76, 59, 47, 67, 59, 67, 64, 55, 56, 59, 43]} />}>
          <Stat label="2017" big>9%</Stat>
          <Stat label={AVG} big>12%</Stat>
          <Stat label="Min. / Max.">9% / 16%</Stat>
          <Stat label="Trend">-0.04% / year</Stat>
        </Card>
        <Card title="Availability per Capita" h="h-[338px]" foot="0.0% per year" chart={<Bars data={[61, 60, 60, 54, 75, 62, 53, 67, 62, 67, 62, 61, 62, 63, 52]} />}>
          <Stat label={AVG} big>9 <Km /></Stat>
          <Stat label="Min. / Max.">8 <Km /> / 11 <Km /></Stat>
          <Stat label="Trend">-0.01 <Km /> / year</Stat>
        </Card>
        <Card title="Available for further Use" h="h-[338px]" foot="2.5% per year" chart={<Spark id="g3" color={ORANGE} data={[47, 36, 37, 57, 76, 51, 31, 63, 50, 65, 66, 40, 43, 46, 23]} />}>
          <Stat label={AVG} big>1 <Km /></Stat>
          <Stat label="Min. / Max.">1 <Km /> / 2 <Km /></Stat>
          <Stat label="Trend">-0.01 <Km /> / year</Stat>
        </Card>
      </div>
      <div className="-mt-[27px] mb-[9px] flex h-[30px] items-start">
        <H2 className="w-[568px]">Water Uses</H2>
        <H2>Basin Variability</H2>
      </div>
      <div className="flex items-start gap-[30px]">
        <Card title="Agricultural Water Use" h="h-[102px]">
          <div className="font-['Liberation_Serif',serif] text-[26px] leading-[30px] font-bold text-[#333] lining-nums">0</div>
        </Card>
        <Card title="Environmental Stress" h="h-[338px]" foot="-0.3% per year" chart={<Spark id="g4" color={ORANGE} data={[76, 76, 76, 75, 76, 76, 75, 76, 76, 76, 76, 76, 76, 76, 74]} />}>
          <Stat label={AVG} big>1%</Stat>
          <Stat label="Min. / Max.">1% / 1%</Stat>
          <Stat label="Trend">0.00% / year</Stat>
        </Card>
        <Card title="Precipitation" h="h-[401px]" foot="1.7% per year" up chart={<Spark id="g5" color="#6dc3a2" data={[55, 63, 52, 76, 61, 57, 58, 71, 74, 73, 71, 61, 70, 61, 58]} />}>
          <Stat label="2017" big>13 <Km /></Stat>
          <Stat label={AVG} big>14 <Km /></Stat>
          <Stat label="Min. / Max.">12 <Km /> / 17 <Km /></Stat>
          <Stat label="Trend">0.09 <Km /> / year</Stat>
        </Card>
      </div>
    </main>
  );
}

/* ---------- footer ---------- */

function IwmiLogo() {
  return (
    <svg width="94" height="67" viewBox="0 0 94 67" fill="#fff" fontFamily="Open Sans, sans-serif">
      <path d="M0 0h8v31H0ZM10 0h8.500l5 17 5-17h3.500l5 17 4.500-17h7l-8 31h-8L29 14l-3.500 17h-8ZM51 0h9l6 15 7-15h9.500v31h-8V12l-6 19h-6l-6-19v19H51ZM86 0h8v31h-8Z" />
      <g stroke="#333" strokeWidth="0.9" fill="none">
        {[19.5, 22, 24.5, 27, 29.5].map((y) => (
          <path key={y} d={`M0 ${y}q6 3 12 0t12 0 12 0 12 0 12 0 12 0 12 0 12 0`} />
        ))}
      </g>
      <g fontSize="9.600" textAnchor="end">
        <text x="94" y="41" textLength="58">International</text>
        <text x="94" y="51" textLength="94">Water Management</text>
        <text x="94" y="61" textLength="38">Institute</text>
      </g>
      <path d="M0 65h94v1.200H0Z" />
    </svg>
  );
}

function UnescoLogo() {
  return (
    <svg width="158" height="66" viewBox="0 0 158 66" fill="#fff">
      <path d="M5 17 31 9 56 17v2.200H5Z" />
      <path d="M11 17.500 31 11.500 50 17.500Z" fill="#333" />
      <path d="M31 13 17 17.500h28Z" />
      <path d="M5 21h51v2H5ZM5 47h51v2H5ZM3 50.500h55v2H3ZM0 54.500h61V57H0Z" />
      <g transform="translate(8.500,45.500) scale(0.28,1)" fontFamily="Liberation Sans, sans-serif" fontSize="29.500">
        <text x="0" y="0" textLength="158">UNESCO</text>
      </g>
      <path d="M70.500 0v66" stroke="#fff" strokeWidth="1.700" strokeDasharray="1.700 2.200" />
      <g fontFamily="Open Sans, sans-serif">
        <text x="79" y="43" fontSize="33" fontWeight="700" textLength="57" lengthAdjust="spacingAndGlyphs">IHE</text>
        <text x="81" y="57" fontSize="13" fontWeight="800" textLength="53">DELFT</text>
      </g>
      <path d="M139 39h18v18h-18Z" />
    </svg>
  );
}

function FaoLogo() {
  return (
    <svg width="50" height="50" viewBox="0 0 50 50" fill="none" stroke="#fff">
      <circle cx="25" cy="25" r="23.800" strokeWidth="2.200" />
      <g fill="#fff" stroke="none" fontFamily="Open Sans, sans-serif" fontWeight="700" textAnchor="middle">
        <text x="25" y="15" fontSize="13">A</text>
        <text x="9.500" y="26" fontSize="12">F</text>
        <text x="40.500" y="26" fontSize="12">O</text>
        <path id="faoArc" d="M5 31A21 21 0 0 0 45 31" fill="none" />
        <g fontSize="6.200">
          <text><textPath href="#faoArc" startOffset="23%">FIAT</textPath></text>
          <text><textPath href="#faoArc" startOffset="76%">PANIS</textPath></text>
        </g>
      </g>
      <path d="M25 28v20" strokeWidth="2" />
      <path d="M12 6 25 34 38 6M15 6l10 22L35 6" strokeWidth="1.100" />
      <path d="M18 24q7 5 7 13 0-8 7-13M19 30q6 3 6 10 0-7 6-10M20 18q5 4 5 11 0-7 5-11" strokeWidth="2" />
      <circle cx="25" cy="19" r="2" fill="#fff" />
    </svg>
  );
}

function WwapLogo() {
  return (
    <svg width="160" height="50" viewBox="0 0 160 50" fill="#fff" fontFamily="Noto Sans, sans-serif">
      <text x="0" y="33" fontSize="18.500" textLength="49" lengthAdjust="spacingAndGlyphs">World</text>
      <text x="52" y="33" fontSize="23" fontWeight="500" textLength="62" lengthAdjust="spacingAndGlyphs">Water</text>
      <text x="23" y="46" fontSize="11.500" fontWeight="500" textLength="131" lengthAdjust="spacingAndGlyphs">Assessment Programme</text>
      <g fill="none" stroke="#fff">
        <g strokeWidth="0.600">
          <circle cx="140.500" cy="14" r="12.500" />
          <circle cx="140.500" cy="14" r="9" />
          <circle cx="140.500" cy="14" r="5.500" />
          <path d="M128 14h25M140.500 1.500v25M131.600 5.200l17.800 17.600M149.400 5.200l-17.800 17.600" />
        </g>
        <path d="M126 4q-6 12 3 21 5 5 12 4M155 4q6 12-3 21-5 5-12 4" strokeWidth="3.200" strokeDasharray="2.200 0.800" />
      </g>
      <path d="M131 9l5-2 4 3-2 4 3 2-2 5-4-2-1-4-3-1ZM143 6l6 2 2 5-4 2-3 5-2-5 2-3-2-3Z" />
    </svg>
  );
}

function Footer() {
  return (
    <footer className="flex h-[243px] bg-[#333] pt-[20px] pl-[15px] text-white">
      <div className="w-[925px] text-[13.700px] leading-[21.300px] tracking-[-0.07px] whitespace-nowrap">
        <div className="text-[16px] leading-[23px] tracking-[-0.1px] text-[#df9100]">ABOUT</div>
        <p>
          This dashboard compiles results from the Water Accounting+ hydrologic model based on global-scale public-
          <br />
          domain datasets. WA+ objective is to achieve equitable and transparent water governance for all water
          <br />
          consumers and to ensure a sustainable water balance.
        </p>
        <p className="mt-[17px]">
          The WA+ framework is developed by the UNESCO-IHE, Delft in partnership with the International Water
          <br />
          Management Institute, the Food and Agriculture Organization of the United Nations, and the World Water
          <br />
          Assessment Program.
        </p>
        <p className="mt-[17px]">© IWMI 2022, all rights reserved – Terms of use – Version 0.1.10 ( what's new )</p>
      </div>
      <div className="pt-[14px]">
        <div className="flex h-[100px] items-start">
          <IwmiLogo />
          <div className="ml-[38px] pt-[1px]"><UnescoLogo /></div>
        </div>
        <div className="flex items-start pl-[40px]">
          <FaoLogo />
          <div className="ml-[39px]"><WwapLogo /></div>
        </div>
      </div>
    </footer>
  );
}

export default function App() {
  return (
    <div className="w-[1278px] bg-white font-['Noto_Sans',sans-serif] oldstyle-nums">
      <TopBar />
      <Intro />
      <div className="flex">
        <MapView />
        <LayerPanel />
      </div>
      <Timeline />
      <div className="flex h-[985px]">
        <Sidebar />
        <Metrics />
      </div>
      <Footer />
    </div>
  );
}
